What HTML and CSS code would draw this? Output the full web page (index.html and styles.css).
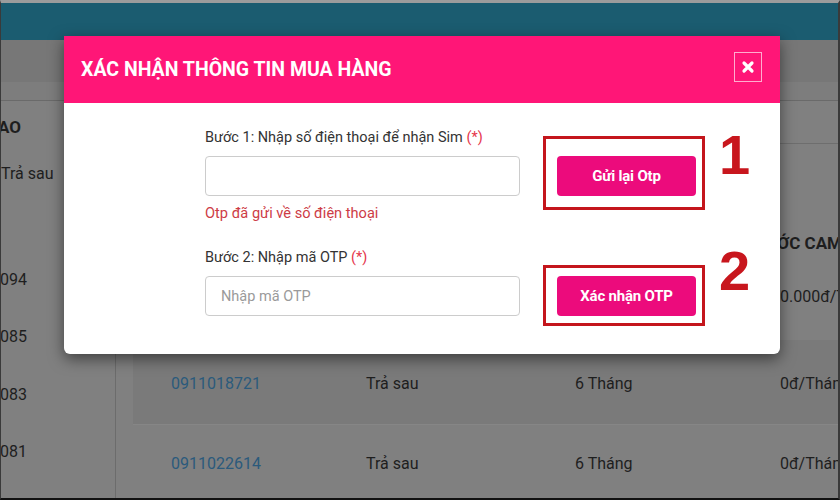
FILE: index.html
```html
<!DOCTYPE html>
<html lang="vi">
<head>
<meta charset="utf-8">
<title>Xác nhận thông tin mua hàng</title>
<link rel="stylesheet" href="styles.css">
</head>
<body>
<div class="page">
  <div class="topbar"></div>
  <div class="band1"></div>
  <div class="band2"></div>
  <div class="content">
    <aside class="left">
      <div class="lhead">AO</div>
      <div class="ltype">Trả sau</div>
      <ul class="lnums">
        <li>094</li>
        <li>085</li>
        <li>083</li>
        <li>081</li>
      </ul>
    </aside>
    <main class="main">
      <div class="subbar"></div>
      <div class="table">
        <div class="row head">
          <div>SỐ THUÊ BAO</div>
          <div>LOẠI</div>
          <div>CAM KẾT</div>
          <div class="cut">CƯỚC CAM KẾT</div>
        </div>
        <div class="row r1">
          <div class="num">0911012094</div>
          <div>Trả sau</div>
          <div>6 Tháng</div>
          <div class="cut2">50.000đ/Tháng</div>
        </div>
        <div class="row alt">
          <div class="num">0911018721</div>
          <div>Trả sau</div>
          <div>6 Tháng</div>
          <div>0đ/Tháng</div>
        </div>
        <div class="row r3">
          <div class="num">0911022614</div>
          <div>Trả sau</div>
          <div>6 Tháng</div>
          <div>0đ/Tháng</div>
        </div>
      </div>
    </main>
  </div>
</div>

<div class="modal">
  <div class="mhead">
    <h2 class="mtitle">XÁC NHẬN THÔNG TIN MUA HÀNG</h2>
    <button class="close" type="button" aria-label="Đóng">
      <svg width="14" height="14" viewBox="0 0 14 14"><path d="M3 3 L11 11 M11 3 L3 11" stroke="#fff" stroke-width="3.2" stroke-linecap="round"/></svg>
    </button>
  </div>
  <div class="mbody">
    <div class="step step1">
      <div class="field">
        <label class="lbl">Bước 1: Nhập số điện thoại để nhận Sim <span class="req">(*)</span></label>
        <input class="inp" type="text">
        <div class="err">Otp đã gửi về số điện thoại</div>
      </div>
      <div class="mark mark1">
        <button class="btn" type="button">Gửi lại Otp</button>
        <span class="badge">1</span>
      </div>
    </div>
    <div class="step step2">
      <div class="field">
        <label class="lbl">Bước 2: Nhập mã OTP <span class="req">(*)</span></label>
        <input class="inp" type="text" placeholder="Nhập mã OTP">
      </div>
      <div class="mark mark2">
        <button class="btn" type="button">Xác nhận OTP</button>
        <span class="badge">2</span>
      </div>
    </div>
  </div>
</div>
</body>
</html>
```

FILE: styles.css
```css
* { box-sizing: border-box; }
html, body { margin: 0; padding: 0; }
body {
  width: 840px;
  height: 500px;
  overflow: hidden;
  position: relative;
  background: #808080;
  font-family: Roboto, "Liberation Sans", sans-serif;
  border-top: 3px solid #9c9c9c;
  border-left: 1px solid #3a3a3a;
  border-right: 2px solid #3a3a3a;
  border-bottom: 2px solid #111;
}
.page { display: flex; flex-direction: column; height: 100%; }
.topbar { height: 37px; background: #1b5c70; flex: none; }
.band1 { height: 42px; background: #777; flex: none; }
.band2 { height: 19px; background: #7d7d7d; border-bottom: 1px solid #6a6a6a; flex: none; }
.content { flex: 1; display: flex; min-height: 0; }

.left {
  width: 115px;
  flex: none;
  border-right: 1px solid #6c6c6c;
  overflow: hidden;
  color: #1e1e1e;
  font-size: 16px;
  line-height: 20px;
  padding-top: 16px;
}
.lhead { font-weight: 700; font-size: 17px; margin-left: -3px; }
.ltype { margin-top: 27px; }
.lnums { list-style: none; margin: 86px 0 0; padding: 0; display: flex; flex-direction: column; gap: 37.3px; }
.lnums li { margin-left: -1px; }

.main { flex: 1; min-width: 0; overflow: hidden; }
.subbar { height: 43px; border-bottom: 1px solid #6e6e6e; }
.table { padding-left: 17px; color: #1e1e1e; font-size: 16px; line-height: 20px; }
.row {
  display: grid;
  grid-template-columns: 195px 209px 205px 1fr;
  padding-left: 38px;
  align-items: start;
  height: 85px;
  white-space: nowrap;
}
.row.head { height: 111px; padding-top: 89px; font-weight: 700; font-size: 17px; }
.row.r1 { padding-top: 32px; }
.row.alt { background: #7a7a7a; border-bottom: 1px solid #868686; padding-top: 34px; }
.row.r3 { padding-top: 29px; }
.num { color: #2b5a7c; }
.cut { text-indent: -26px; }
.cut2 { text-indent: -9px; }

/* modal */
.modal {
  position: absolute;
  top: 33px;
  left: 63px;
  width: 716px;
  background: #fff;
  border-radius: 0 0 6px 6px;
  box-shadow: 0 5px 15px rgba(0,0,0,.5);
}
.mhead {
  height: 67px;
  background: #ff1677;
  display: flex;
  align-items: center;
  justify-content: space-between;
  padding: 0 18px 0 17px;
}
.mtitle {
  margin: 0;
  color: #fff;
  font-family: Roboto, sans-serif;
  font-weight: 700;
  font-size: 19.5px;
}
.close {
  width: 28px;
  height: 30px;
  margin-top: -5px;
  border: 1px solid rgba(255,255,255,.65);
  background: transparent;
  padding: 0;
  display: flex;
  align-items: center;
  justify-content: center;
}
.close svg { display: block; }
.mbody { padding: 27px 0 28px 141px; display: flex; flex-direction: column; gap: 29px; }
.step { display: flex; align-items: flex-start; }
.field { width: 315px; display: flex; flex-direction: column; }
.lbl { font-size: 14.5px; line-height: 16px; color: #333; white-space: nowrap; }
.req { color: #e5364b; }
.inp {
  margin-top: 10px;
  width: 315px;
  height: 40px;
  border: 1px solid #ccc;
  border-radius: 4px;
  padding: 0 15px;
  font-family: Roboto, sans-serif;
  font-size: 14.5px;
  color: #333;
  background: #fff;
}
.inp::placeholder { color: #9a9a9a; }
.err { margin-top: 9px; font-size: 14.6px; line-height: 16px; color: #cd3c46; }

.mark {
  position: relative;
  margin-left: 23px;
  border: 3px solid #c4161c;
  padding: 17px 6px 11px 11px;
}
.mark2 { margin-top: 15px; padding-top: 8px; padding-bottom: 7px; }
.mark1 { margin-top: 6px; }
.btn {
  display: block;
  width: 139px;
  height: 40px;
  border: 0;
  border-radius: 4px;
  background: #ec0b7c;
  color: #fff;
  font-family: Roboto, sans-serif;
  font-weight: 700;
  font-size: 15px;
  letter-spacing: -0.2px;
}
.badge {
  position: absolute;
  left: calc(100% + 17px);
  top: -16px;
  font-family: "Liberation Sans", Arial, sans-serif;
  font-weight: 700;
  font-size: 56px;
  line-height: 64px;
  color: #c8161d;
}
.mark2 .badge { top: -29px; }
```
